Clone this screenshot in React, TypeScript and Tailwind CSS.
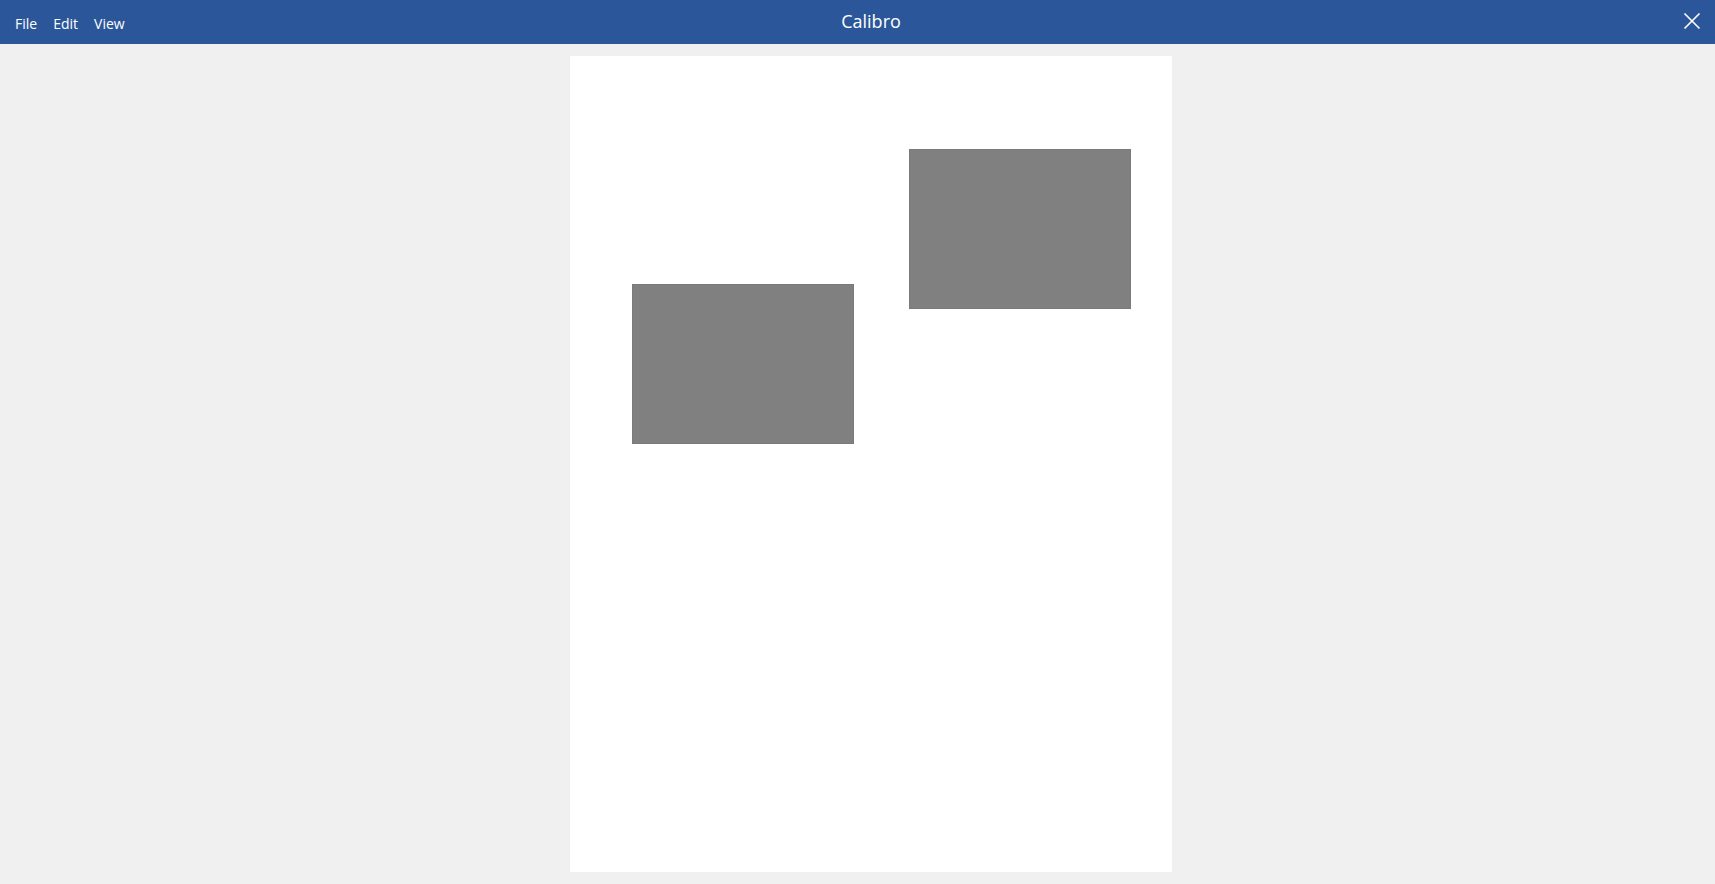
import React from 'react';

const shapes = [
  { id: 'a', left: 62, top: 228 },
  { id: 'b', left: 339, top: 93 },
];

export default function App() {
  return (
    <div className="min-h-screen w-full bg-[#f0f0f0] flex flex-col" style={{ fontFamily: '"Segoe UI", "Open Sans", "Noto Sans", sans-serif' }}>
      {/* Title bar */}
      <header className="relative h-[44px] bg-[#2b579a] text-white flex items-center">
        <nav className="flex items-center gap-[16px] pl-[15px] text-[14px] pt-[2px]">
          <span>File</span>
          <span>Edit</span>
          <span>View</span>
        </nav>
        <div className="absolute left-[27px] right-0 top-0 h-[42px] flex items-center justify-center pointer-events-none">
          <span className="text-[18px]">Calibro</span>
        </div>
        <button className="absolute right-[14px] top-[12px] w-[18px] h-[18px] flex items-center justify-center">
          <svg width="18" height="18" viewBox="0 0 18 18" fill="none" stroke="white" strokeWidth="1.6">
            <path d="M1.5 1.5 L16.5 16.5 M16.5 1.5 L1.5 16.5" />
          </svg>
        </button>
      </header>

      {/* Canvas */}
      <main className="flex justify-center pl-[27px] pt-[12px]">
        <div className="relative w-[602px] h-[816px] bg-white">
          {shapes.map((s) => (
            <div
              key={s.id}
              className="absolute w-[222px] h-[160px] bg-[#808080] border border-[#7a7a7a]"
              style={{ left: s.left, top: s.top }}
            />
          ))}
        </div>
      </main>
    </div>
  );
}
